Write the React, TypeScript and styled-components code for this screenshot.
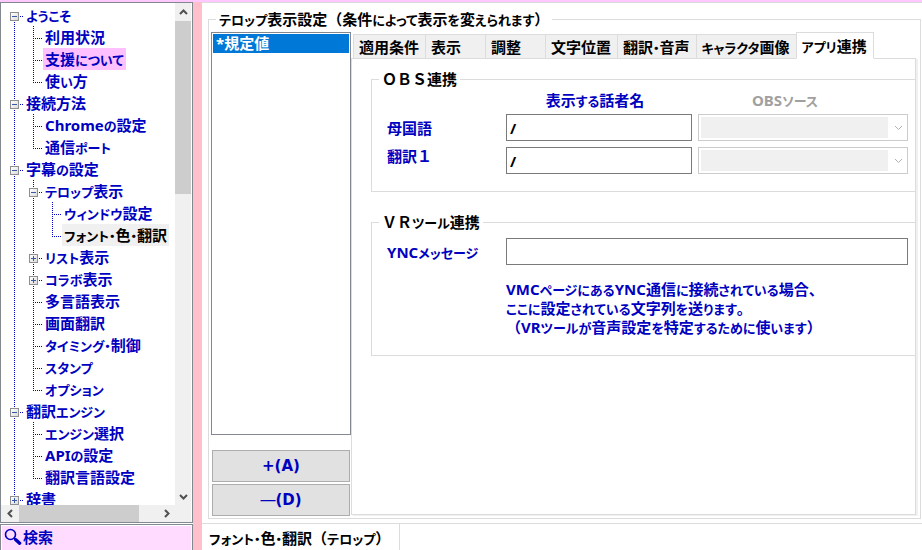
import React from "react";
import styled, { createGlobalStyle, css } from "styled-components";

const BLUE = "#0000c0";
const LINE = "#dcdcdc";
const FRAME = "#828790";

const GlobalStyle = createGlobalStyle`
  *, *::before, *::after { box-sizing: border-box; }
  body {
    margin: 0;
    background: #fff;
    color: #000;
    font: bold 15px/18px "Noto Sans", "Noto Sans CJK JP", sans-serif;
  }
  button, input, select { font: inherit; color: inherit; margin: 0; border-radius: 0; }
`;

/* ---------- text ---------- */

const KanaRun = styled.span`
  font-size: 13px;
  line-height: 1;
  font-feature-settings: "palt";
`;

/** Sets kana small and proportional; kanji, brackets and Latin stay as they are. */
function Ja({ children }: { children: string }) {
  return (
    <>
      {children.split(/([ぁ-んァ-ヶー・]+)/).map((part, i) =>
        i % 2 ? <KanaRun key={i}>{part}</KanaRun> : part
      )}
    </>
  );
}

/* ---------- page frame ---------- */

const Page = styled.div`
  height: 100vh;
  display: flex;
  flex-direction: column;
  overflow: hidden;
`;

const TopStrip = styled.div`
  flex: none;
  height: 2px;
  background: #ffc8ff;
`;

const Columns = styled.div`
  flex: 1;
  min-height: 0;
  display: flex;
  background: #ffc0cb;
`;

/* ---------- sidebar ---------- */

const Sidebar = styled.nav`
  flex: none;
  width: 193px;
  margin-right: 9px;
  display: flex;
  flex-direction: column;
  background: #fff;
`;

const TreeFrame = styled.div`
  flex: 1;
  min-height: 0;
  display: grid;
  grid-template: minmax(0, 1fr) 17px / minmax(0, 1fr) 16px;
  padding: 0 1px 0 0;
  border: 1px solid ${FRAME};
`;

const TreeView = styled.ul`
  margin: 0;
  padding: 1px 0 0 4px;
  overflow: hidden;
  list-style: none;
`;

const TreeRow = styled.li`
  display: flex;
  height: 22px;
`;

type GuideKind = "first" | "line" | "tee" | "end";

const dots = (dir: string) =>
  `repeating-linear-gradient(${dir}, ${BLUE} 0 1px, transparent 1px 2px)`;

const Guide = styled.span<{ $kind: GuideKind }>`
  flex: none;
  width: 19px;
  display: flex;
  padding: 8px 0 0 5px;
  background-repeat: no-repeat;
  ${({ $kind }) => {
    const down = dots("to bottom");
    const across = dots("to right");
    if ($kind === "line")
      return css`background-image: ${down}; background-size: 1px 100%; background-position: 9px 0;`;
    const span = { first: "10px", tee: "22px", end: "12px" }[$kind];
    const top = $kind === "first" ? "12px" : "0";
    return css`
      background-image: ${down}, ${across};
      background-size: 1px ${span}, 9px 1px;
      background-position: 9px ${top}, 9px 12px;
    `;
  }}
`;

const Expander = styled.button`
  width: 9px;
  height: 9px;
  padding: 0;
  display: flex;
  border: 1px solid #8f8f8f;
  background: linear-gradient(135deg, #fff, #dcdcdc);
`;

const NodeLink = styled.a<{ $tone?: "pink" | "current" }>`
  padding: 2px 2px;
  white-space: nowrap;
  text-decoration: none;
  color: ${({ $tone }) => ($tone === "current" ? "#000" : BLUE)};
  background: ${({ $tone }) =>
    $tone === "pink" ? "#ffc0ff" : $tone === "current" ? "#f0f0f0" : "transparent"};
`;

type Node = {
  label: string;
  guides: GuideKind[];
  box?: "+" | "-";
  tone?: "pink" | "current";
};

const NODES: Node[] = [
  { label: "ようこそ", guides: ["first"], box: "-" },
  { label: "利用状況", guides: ["line", "tee"] },
  { label: "支援について", guides: ["line", "tee"], tone: "pink" },
  { label: "使い方", guides: ["line", "end"] },
  { label: "接続方法", guides: ["tee"], box: "-" },
  { label: "Chromeの設定", guides: ["line", "tee"] },
  { label: "通信ポート", guides: ["line", "end"] },
  { label: "字幕の設定", guides: ["tee"], box: "-" },
  { label: "テロップ表示", guides: ["line", "tee"], box: "-" },
  { label: "ウィンドウ設定", guides: ["line", "line", "tee"] },
  { label: "フォント・色・翻訳", guides: ["line", "line", "end"], tone: "current" },
  { label: "リスト表示", guides: ["line", "tee"], box: "+" },
  { label: "コラボ表示", guides: ["line", "tee"], box: "+" },
  { label: "多言語表示", guides: ["line", "tee"] },
  { label: "画面翻訳", guides: ["line", "tee"] },
  { label: "タイミング・制御", guides: ["line", "tee"] },
  { label: "スタンプ", guides: ["line", "tee"] },
  { label: "オプション", guides: ["line", "end"] },
  { label: "翻訳エンジン", guides: ["tee"], box: "-" },
  { label: "エンジン選択", guides: ["line", "tee"] },
  { label: "APIの設定", guides: ["line", "tee"] },
  { label: "翻訳言語設定", guides: ["line", "end"] },
  { label: "辞書", guides: ["tee"], box: "+" },
];

function TreeItem({ node }: { node: Node }) {
  const last = node.guides.length - 1;
  return (
    <TreeRow>
      {node.guides.map((kind, i) => (
        <Guide key={i} $kind={kind}>
          {i === last && node.box && (
            <Expander type="button" aria-label={node.label} aria-expanded={node.box === "-"}>
              <svg width="7" height="7" viewBox="0 0 7 7" shapeRendering="crispEdges">
                <path d={node.box === "-" ? "M1 3.5H6" : "M1 3.5H6M3.5 1V6"} stroke="#3a58a8" />
              </svg>
            </Expander>
          )}
        </Guide>
      ))}
      <NodeLink href="#" $tone={node.tone}>
        <Ja>{node.label}</Ja>
      </NodeLink>
    </TreeRow>
  );
}

const ScrollBar = styled.div<{ $horizontal?: boolean }>`
  display: flex;
  flex-direction: ${({ $horizontal }) => ($horizontal ? "row" : "column")};
  justify-content: space-between;
  padding: ${({ $horizontal }) => ($horizontal ? "0 0 0 1px" : "1px 0 0")};
  background: #f0f0f0;
`;

const ScrollButton = styled.button`
  flex: none;
  width: 17px;
  height: 17px;
  padding: 0;
  display: grid;
  place-items: center;
  border: 0;
  background: none;
`;

const Thumb = styled.div<{ $share: number }>`
  flex: 0 1 ${({ $share }) => $share}%;
  background: #cdcdcd;
`;

const Track = styled.div<{ $horizontal?: boolean }>`
  flex: 1;
  display: flex;
  flex-direction: ${({ $horizontal }) => ($horizontal ? "row" : "column")};
`;

const ARROWS = {
  up: "M1 6L4.5 2.5L8 6",
  down: "M1 3L4.5 6.5L8 3",
  left: "M6 1L2.5 4.5L6 8",
  right: "M3 1L6.5 4.5L3 8",
};

function Arrow({ to, color = "#505050", width = 2 }: { to: keyof typeof ARROWS; color?: string; width?: number }) {
  return (
    <svg width="9" height="9" viewBox="0 0 9 9" fill="none" aria-hidden>
      <path d={ARROWS[to]} stroke={color} strokeWidth={width} />
    </svg>
  );
}

const Corner = styled.div`
  background: #f0f0f0;
`;

const SearchButton = styled.button`
  flex: none;
  height: 26px;
  margin-top: 1px;
  padding: 0 3px 2px;
  display: flex;
  align-items: center;
  gap: 1px;
  border: 1px solid ${FRAME};
  border-bottom: 0;
  background: #ffdcff;
  color: ${BLUE};
  box-shadow: inset 1px 1px #fff, inset -1px 0 #fff;
`;

/* ---------- main area ---------- */

const Main = styled.main`
  flex: 1;
  min-width: 0;
  display: flex;
  flex-direction: column;
  border-top: 1px solid ${LINE};
  background: #fff;
`;

const Settings = styled.fieldset`
  flex: 1;
  min-width: 0;
  min-height: 0;
  margin: 7px 1px 4px 6px;
  padding: 4px 2px 2px 2px;
  display: flex;
  border: 1px solid ${LINE};
`;

const Legend = styled.legend`
  margin-left: 5px;
  padding: 0 3px;
`;

const ListColumn = styled.div`
  flex: none;
  width: 140px;
  display: flex;
  flex-direction: column;
`;

const ListBox = styled.ul`
  flex: 1;
  margin: 0 0 14px;
  padding: 1px;
  border: 1px solid ${FRAME};
  list-style: none;
`;

const ListItem = styled.li`
  height: 19px;
  padding-left: 3px;
  line-height: 19px;
  background: #0078d7;
  color: #fff;
`;

const PushButton = styled.button`
  height: 32px;
  margin: 1px 1px;
  padding: 0;
  font-family: "DejaVu Sans", "Noto Sans CJK JP", sans-serif;
  border: 1px solid #adadad;
  background: #e1e1e1;
  color: ${BLUE};
  & + & { margin-bottom: 0; }
`;

const ThinDash = styled.span`
  font-weight: normal;
`;

const TabArea = styled.div`
  flex: 1;
  min-width: 0;
  display: flex;
  flex-direction: column;
`;

const TabList = styled.div`
  position: relative;
  z-index: 1;
  display: flex;
  align-items: flex-end;
  height: 27px;
  margin-bottom: -1px;
  padding-left: 2px;
`;

const Tab = styled.button<{ $active?: boolean }>`
  flex: none;
  height: ${({ $active }) => ($active ? 27 : 25)}px;
  min-width: 60px;
  padding: 0 6px 0 5px;
  text-align: left;
  white-space: nowrap;
  border: 1px solid ${LINE};
  border-right-width: ${({ $active }) => ($active ? 1 : 0)}px;
  border-bottom-color: ${({ $active }) => ($active ? "#fff" : LINE)};
  background: ${({ $active }) => ($active ? "#fff" : "#f0f0f0")};
`;

const TabPanel = styled.section`
  flex: 1;
  min-height: 0;
  margin: 0 2px 1px 0;
  padding: 11px 0 0 19px;
  display: flex;
  flex-direction: column;
  gap: 21px;
  border: 1px solid ${LINE};
  box-shadow: 2px 1px #f0f0f0;
`;

const Group = styled.fieldset<{ $top?: number; $bottom: number }>`
  min-width: 0;
  margin: 0;
  padding: ${({ $top = 0 }) => $top}px 7px ${({ $bottom }) => $bottom}px 15px;
  border: 1px solid ${LINE};
  border-right: 0;
`;

const GroupLegend = styled(Legend)`
  margin-left: -8px;
`;

const FormGrid = styled.div`
  display: grid;
  grid-template-columns: 113px minmax(0, 186fr) minmax(0, 210fr);
  gap: 6px;
  align-items: center;
  color: ${BLUE};
`;

const ColumnHead = styled.span<{ $column: number; $muted?: boolean }>`
  grid-column: ${({ $column }) => $column};
  padding: 5px ${({ $muted }) => ($muted ? 36 : 8)}px 0 0;
  line-height: 15px;
  text-align: center;
  color: ${({ $muted }) => ($muted ? "#a0a0a0" : BLUE)};
`;

const LabelStack = styled.div`
  grid-area: 2 / 1 / 4 / 2;
  align-self: start;
  display: flex;
  flex-direction: column;
  gap: 10px;
  padding-top: 5px;
`;

const FieldLabel = styled.label`
  white-space: nowrap;
`;

const TextBox = styled.input<{ $wide?: boolean }>`
  grid-column: ${({ $wide }) => ($wide ? "2 / 4" : "2")};
  width: 100%;
  height: 27px;
  padding: 0 3px;
  border: 1px solid #7a7a7a;
  background: #fff;
  color: #000;
  outline: 0;
`;

const SelectWrap = styled.div`
  display: grid;
  grid-template-columns: minmax(0, 1fr) 19px;
  align-items: center;
`;

const Select = styled.select`
  grid-area: 1 / 1 / 2 / 3;
  width: 100%;
  height: 27px;
  padding: 2px 19px 2px 2px;
  appearance: none;
  border: 1px solid #cccccc;
  background: linear-gradient(#f0f0f0, #f0f0f0) content-box, #fff;
  opacity: 1;
`;

const SelectArrow = styled.span`
  grid-area: 1 / 2;
  display: grid;
  place-items: center;
  padding-right: 1px;
  pointer-events: none;
`;

const Note = styled.p`
  margin: 15px 0 0 119px;
  line-height: 19px;
  color: ${BLUE};
`;

const BottomTabs = styled.footer`
  flex: none;
  height: 27px;
  display: flex;
  border-top: 1px solid ${LINE};
`;

const BottomTab = styled.button`
  width: 198px;
  padding: 2px 7px 0;
  text-align: left;
  white-space: nowrap;
  border: 0;
  border-right: 1px solid ${LINE};
  background: #fff;
`;

const TABS = ["適用条件", "表示", "調整", "文字位置", "翻訳・音声", "キャラクタ画像", "アプリ連携"];

const LANGUAGES = [
  { id: "native", label: "母国語" },
  { id: "trans1", label: "翻訳１" },
];

export default function App() {
  return (
    <Page>
      <GlobalStyle />
      <TopStrip />
      <Columns>
        <Sidebar>
          <TreeFrame>
            <TreeView>
              {NODES.map((node) => (
                <TreeItem key={node.label} node={node} />
              ))}
            </TreeView>
            <ScrollBar>
              <ScrollButton type="button" aria-label="上へ"><Arrow to="up" /></ScrollButton>
              <Track><Thumb $share={37} /></Track>
              <ScrollButton type="button" aria-label="下へ"><Arrow to="down" /></ScrollButton>
            </ScrollBar>
            <ScrollBar $horizontal>
              <ScrollButton type="button" aria-label="左へ"><Arrow to="left" /></ScrollButton>
              <Track $horizontal><Thumb $share={86} /></Track>
              <ScrollButton type="button" aria-label="右へ"><Arrow to="right" /></ScrollButton>
            </ScrollBar>
            <Corner />
          </TreeFrame>
          <SearchButton type="button">
            <svg width="18" height="18" viewBox="0 0 18 18" fill="none" aria-hidden>
              <circle cx="6.5" cy="6.5" r="5" stroke={BLUE} strokeWidth="1.6" />
              <path d="M10 10L12 12" stroke={BLUE} strokeWidth="1.6" />
              <path d="M11.8 11.8L15.6 15.2" stroke={BLUE} strokeWidth="3.4" strokeLinecap="round" />
            </svg>
            検索
          </SearchButton>
        </Sidebar>

        <Main>
          <Settings>
            <Legend><Ja>テロップ表示設定（条件によって表示を変えられます）</Ja></Legend>
            <ListColumn>
              <ListBox>
                <ListItem>*規定値</ListItem>
              </ListBox>
              <PushButton type="button">+(A)</PushButton>
              <PushButton type="button"><ThinDash>―</ThinDash>(D)</PushButton>
            </ListColumn>
            <TabArea>
              <TabList role="tablist">
                {TABS.map((name, i) => (
                  <Tab key={name} type="button" role="tab" aria-selected={i === 6} $active={i === 6}>
                    <Ja>{name}</Ja>
                  </Tab>
                ))}
              </TabList>
              <TabPanel role="tabpanel">
                <Group $bottom={17}>
                  <GroupLegend>ＯＢＳ連携</GroupLegend>
                  <FormGrid>
                    <ColumnHead $column={2}><Ja>表示する話者名</Ja></ColumnHead>
                    <ColumnHead $column={3} $muted><Ja>OBSソース</Ja></ColumnHead>
                    <LabelStack>
                      {LANGUAGES.map(({ id, label }) => (
                        <FieldLabel key={id} htmlFor={id}>{label}</FieldLabel>
                      ))}
                    </LabelStack>
                    {LANGUAGES.map(({ id, label }) => (
                      <React.Fragment key={id}>
                        <TextBox id={id} defaultValue="/" />
                        <SelectWrap>
                          <Select disabled aria-label={`${label} OBSソース`} />
                          <SelectArrow><Arrow to="down" color="#b0b0b0" width={1} /></SelectArrow>
                        </SelectWrap>
                      </React.Fragment>
                    ))}
                  </FormGrid>
                </Group>
                <Group $top={7} $bottom={18}>
                  <GroupLegend>ＶＲ<Ja>ツール</Ja>連携</GroupLegend>
                  <FormGrid>
                    <FieldLabel htmlFor="ync"><Ja>YNCメッセージ</Ja></FieldLabel>
                    <TextBox id="ync" $wide />
                  </FormGrid>
                  <Note>
                    <Ja>VMCページにあるYNC通信に接続されている場合、</Ja><br />
                    <Ja>ここに設定されている文字列を送ります。</Ja><br />
                    <Ja>（VRツールが音声設定を特定するために使います）</Ja>
                  </Note>
                </Group>
              </TabPanel>
            </TabArea>
          </Settings>
          <BottomTabs>
            <BottomTab type="button"><Ja>フォント・色・翻訳（テロップ）</Ja></BottomTab>
          </BottomTabs>
        </Main>
      </Columns>
    </Page>
  );
}
